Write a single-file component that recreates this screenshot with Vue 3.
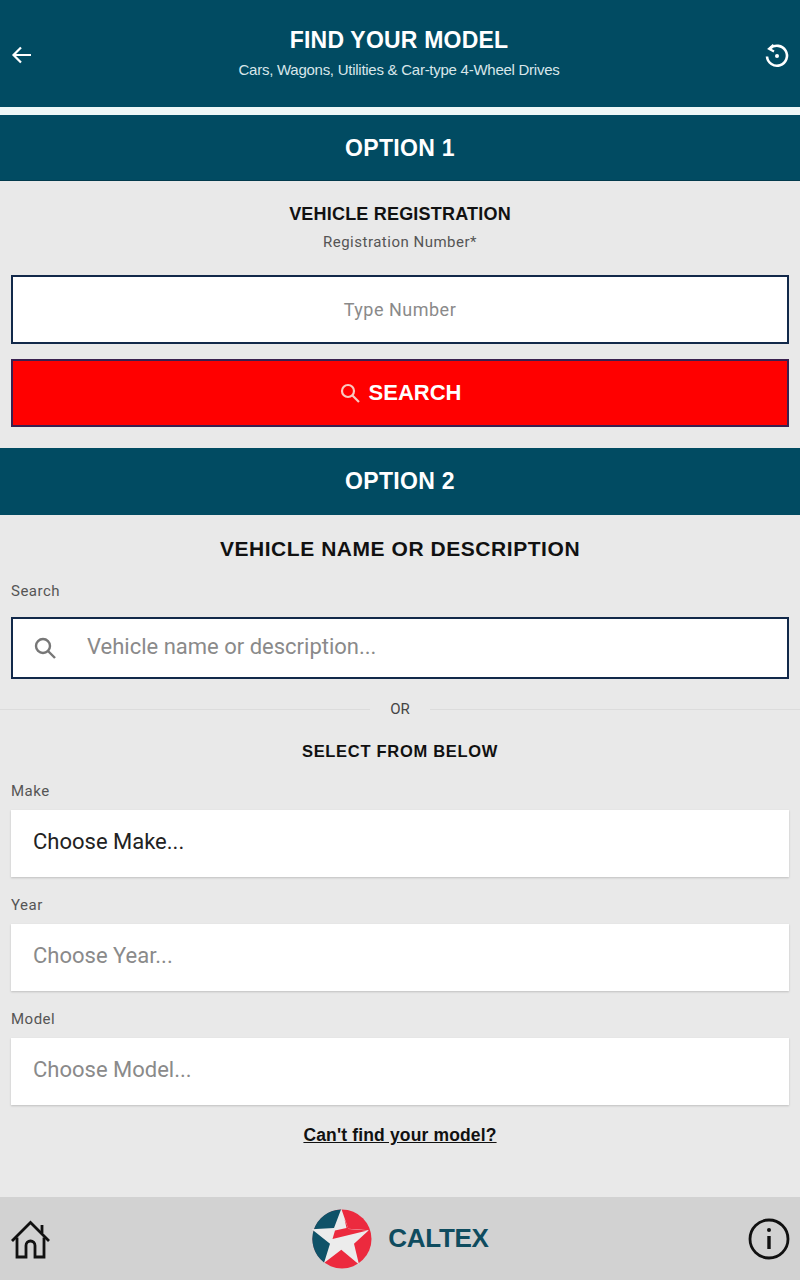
<script setup>
import { ref } from 'vue';

const regNumber = ref('');
const vehicleName = ref('');

const selects = [
  { label: 'Make', text: 'Choose Make...', active: true },
  { label: 'Year', text: 'Choose Year...', active: false },
  { label: 'Model', text: 'Choose Model...', active: false },
];
</script>

<template>
  <div class="page">
    <header class="top">
      <svg class="back" width="24" height="24" viewBox="0 0 24 24" fill="none" stroke="#fff" stroke-width="2.2">
        <path d="M21 12H3.500M11 4.500L3.500 12l7.500 7.500" />
      </svg>
      <div class="top-text">
        <h1>FIND YOUR MODEL</h1>
        <p>Cars, Wagons, Utilities &amp; Car-type 4-Wheel Drives</p>
      </div>
      <svg class="reset" width="26" height="26" viewBox="0 0 26 26" fill="none" stroke="#fff" stroke-width="2.6">
        <path d="M6 5.600A10 10 0 1 1 3 13.500" />
        <path d="M9.500 1.800L5 5.800l5 2.700" stroke-width="2.200" />
        <circle cx="13" cy="13" r="2" fill="#fff" stroke="none" />
      </svg>
    </header>

    <div class="option first">OPTION 1</div>
    <section class="reg">
      <h2>VEHICLE REGISTRATION</h2>
      <div class="reg-label">Registration Number*</div>
      <input v-model="regNumber" class="reg-input" placeholder="Type Number" />
      <button class="search-btn">
        <svg width="22" height="22" viewBox="0 0 22 22" fill="none" stroke="#f9c9c0" stroke-width="2.200">
          <circle cx="9" cy="9" r="6" />
          <path d="M13.500 13.500L20 20" />
        </svg>
        SEARCH
      </button>
    </section>

    <div class="option">OPTION 2</div>
    <section class="desc">
      <h2 class="big">VEHICLE NAME OR DESCRIPTION</h2>
      <div class="field-label search-label">Search</div>
      <div class="search-box">
        <svg width="24" height="24" viewBox="0 0 24 24" fill="none" stroke="#777" stroke-width="2.400">
          <circle cx="10" cy="10" r="7" />
          <path d="M15 15l7 7" />
        </svg>
        <input v-model="vehicleName" placeholder="Vehicle name or description..." />
      </div>
      <div class="or-row">
        <span class="line"></span>
        <span>OR</span>
        <span class="line"></span>
      </div>
      <h3>SELECT FROM BELOW</h3>
      <div v-for="s in selects" :key="s.label" class="select-group">
        <div class="field-label">{{ s.label }}</div>
        <div class="select" :class="{ active: s.active }">{{ s.text }}</div>
      </div>
      <a class="cant-find">Can't find your model?</a>
    </section>

    <footer class="bottom">
      <svg width="42" height="42" viewBox="0 0 42 42" fill="none" stroke="#111" stroke-width="2.800">
        <path d="M2 23L20.500 4.500 39 23" />
        <path d="M32 15V7" />
        <path d="M7 19.500V39H16V27.500a4.500 4.500 0 0 1 9 0V39H34V19.500" />
      </svg>
      <div class="logo">
        <svg width="62" height="62" viewBox="0 0 62 62">
          <circle cx="31" cy="31" r="29.500" fill="#ec2a3e" />
          <path d="M31 31L30.300 1.500A29.500 29.500 0 0 0 13 54.500Z" fill="#0f5268" />
          <path d="M30.300 .8L37.300 20.700 57.800 22.300 43 35.700 48 56.500 30.300 41.700 13 55 19 35.700 .8 21.300 23 20Z" fill="#ececec" />
          <path d="M33.500 11L37.500 21 56.500 22.500 21.500 31 24 22.500 35.500 20Z" fill="#ec2a3e" />
        </svg>
        <span class="logo-text">CALTEX</span>
      </div>
      <svg width="42" height="42" viewBox="0 0 42 42" fill="none" stroke="#111" stroke-width="2.800">
        <circle cx="21" cy="21" r="19" />
        <path d="M21 18v13" stroke-width="3.400" />
        <circle cx="21" cy="12" r="2" fill="#111" stroke="none" />
      </svg>
    </footer>
  </div>
</template>

<style scoped>
.page {
  width: 800px;
  height: 1280px;
  background: #e9e9e9;
  display: flex;
  flex-direction: column;
  font-family: "Roboto", "Liberation Sans", sans-serif;
  overflow: hidden;
}

.top {
  height: 107px;
  flex-shrink: 0;
  background: #014b62;
  display: flex;
  align-items: center;
  justify-content: space-between;
  padding: 0 10px;
  box-sizing: border-box;
  color: #fff;
}

.back {
  margin-top: 2px;
}

.reset {
  margin-top: 5px;
}

.top-text {
  text-align: center;
  margin-bottom: 3px;
}

h1 {
  margin: 0;
  font: bold 23px "Liberation Sans", sans-serif;
  letter-spacing: 0.2px;
  line-height: 28px;
}

.top-text p {
  margin: 7px 0 0;
  font: 15px "Liberation Sans", sans-serif;
  color: #d8e6ea;
  line-height: 18px;
  letter-spacing: -0.26px;
}

.option {
  height: 67px;
  flex-shrink: 0;
  background: #014b62;
  color: #fff;
  font: bold 23px/66px "Liberation Sans", sans-serif;
  letter-spacing: 0.3px;
  text-align: center;
}

.option.first {
  height: 74px;
  border-top: 8px solid #eef7f7;
  border-bottom: 1px solid #023a4c;
  box-sizing: border-box;
}

.reg {
  height: 267px;
  flex-shrink: 0;
  padding: 0 11px;
  text-align: center;
  box-sizing: border-box;
  display: flex;
  flex-direction: column;
}

h2 {
  margin: 22px 0 0;
  font: bold 18px/22px "Liberation Sans", sans-serif;
  color: #111;
  letter-spacing: 0.2px;
}

.reg-label {
  margin-top: 8px;
  font-size: 15px;
  line-height: 18px;
  letter-spacing: 0.5px;
  color: #555;
}

.reg-input {
  margin-top: 24px;
  height: 69px;
  flex-shrink: 0;
  border: 2px solid #12294a;
  background: #fff;
  text-align: center;
  font: 18px "Roboto", sans-serif;
  letter-spacing: 0.5px;
  box-sizing: border-box;
  outline: none;
}

.reg-input::placeholder {
  color: #8a8a8a;
}

.search-btn {
  margin-top: 15px;
  height: 68px;
  flex-shrink: 0;
  border: 2px solid #3a2050;
  background: #ff0000;
  color: #fff;
  font: bold 22px "Liberation Sans", sans-serif;
  display: flex;
  align-items: center;
  justify-content: center;
  gap: 8px;
  box-sizing: border-box;
}

.desc {
  flex: 1;
  padding: 0 11px;
  display: flex;
  flex-direction: column;
  min-height: 0;
}

.big {
  margin: 21px 0 0;
  font-size: 21px;
  line-height: 26px;
  letter-spacing: 0.55px;
  text-align: center;
}

.field-label {
  font-size: 15px;
  line-height: 18px;
  letter-spacing: 0.5px;
  color: #555;
}

.search-label {
  margin-top: 20px;
}

.search-box {
  margin-top: 17px;
  height: 62px;
  flex-shrink: 0;
  border: 2px solid #12294a;
  background: #fff;
  display: flex;
  align-items: center;
  padding-left: 20px;
  gap: 30px;
  box-sizing: border-box;
}

.search-box input {
  flex: 1;
  border: none;
  outline: none;
  background: none;
  padding: 0 0 4px;
  font: 22px "Roboto", sans-serif;
}

.search-box input::placeholder {
  color: #8a8a8a;
}

.or-row {
  margin: 20px -11px 0;
  height: 20px;
  display: flex;
  align-items: center;
  gap: 20px;
  font-size: 15px;
  color: #444;
}

.line {
  flex: 1;
  height: 1px;
  background: #dcdcdc;
}

h3 {
  margin: 22px 0 0;
  font: bold 16.500px/20px "Liberation Sans", sans-serif;
  letter-spacing: 0.7px;
  color: #111;
  text-align: center;
}

.select-group {
  margin-top: 21px;
}

.select-group + .select-group {
  margin-top: 19px;
}

.select {
  margin-top: 10px;
  height: 67px;
  background: #fff;
  box-shadow: 0 1px 2px rgba(0, 0, 0, 0.18);
  padding-left: 22px;
  box-sizing: border-box;
  font-size: 22px;
  line-height: 64px;
  color: #8a8a8a;
}

.select.active {
  color: #222;
}

.cant-find {
  margin-top: 20px;
  text-align: center;
  font: bold 17.500px/20px "Liberation Sans", sans-serif;
  letter-spacing: 0.15px;
  color: #111;
  text-decoration: underline;
}

.bottom {
  height: 83px;
  flex-shrink: 0;
  background: #d2d2d2;
  display: flex;
  align-items: center;
  justify-content: space-between;
  padding: 0 10px;
  box-sizing: border-box;
}

.logo {
  display: flex;
  align-items: center;
  gap: 15px;
}

.logo-text {
  font: bold 26px "Liberation Sans", sans-serif;
  letter-spacing: -0.3px;
  color: #0f4c5f;
}
</style>
